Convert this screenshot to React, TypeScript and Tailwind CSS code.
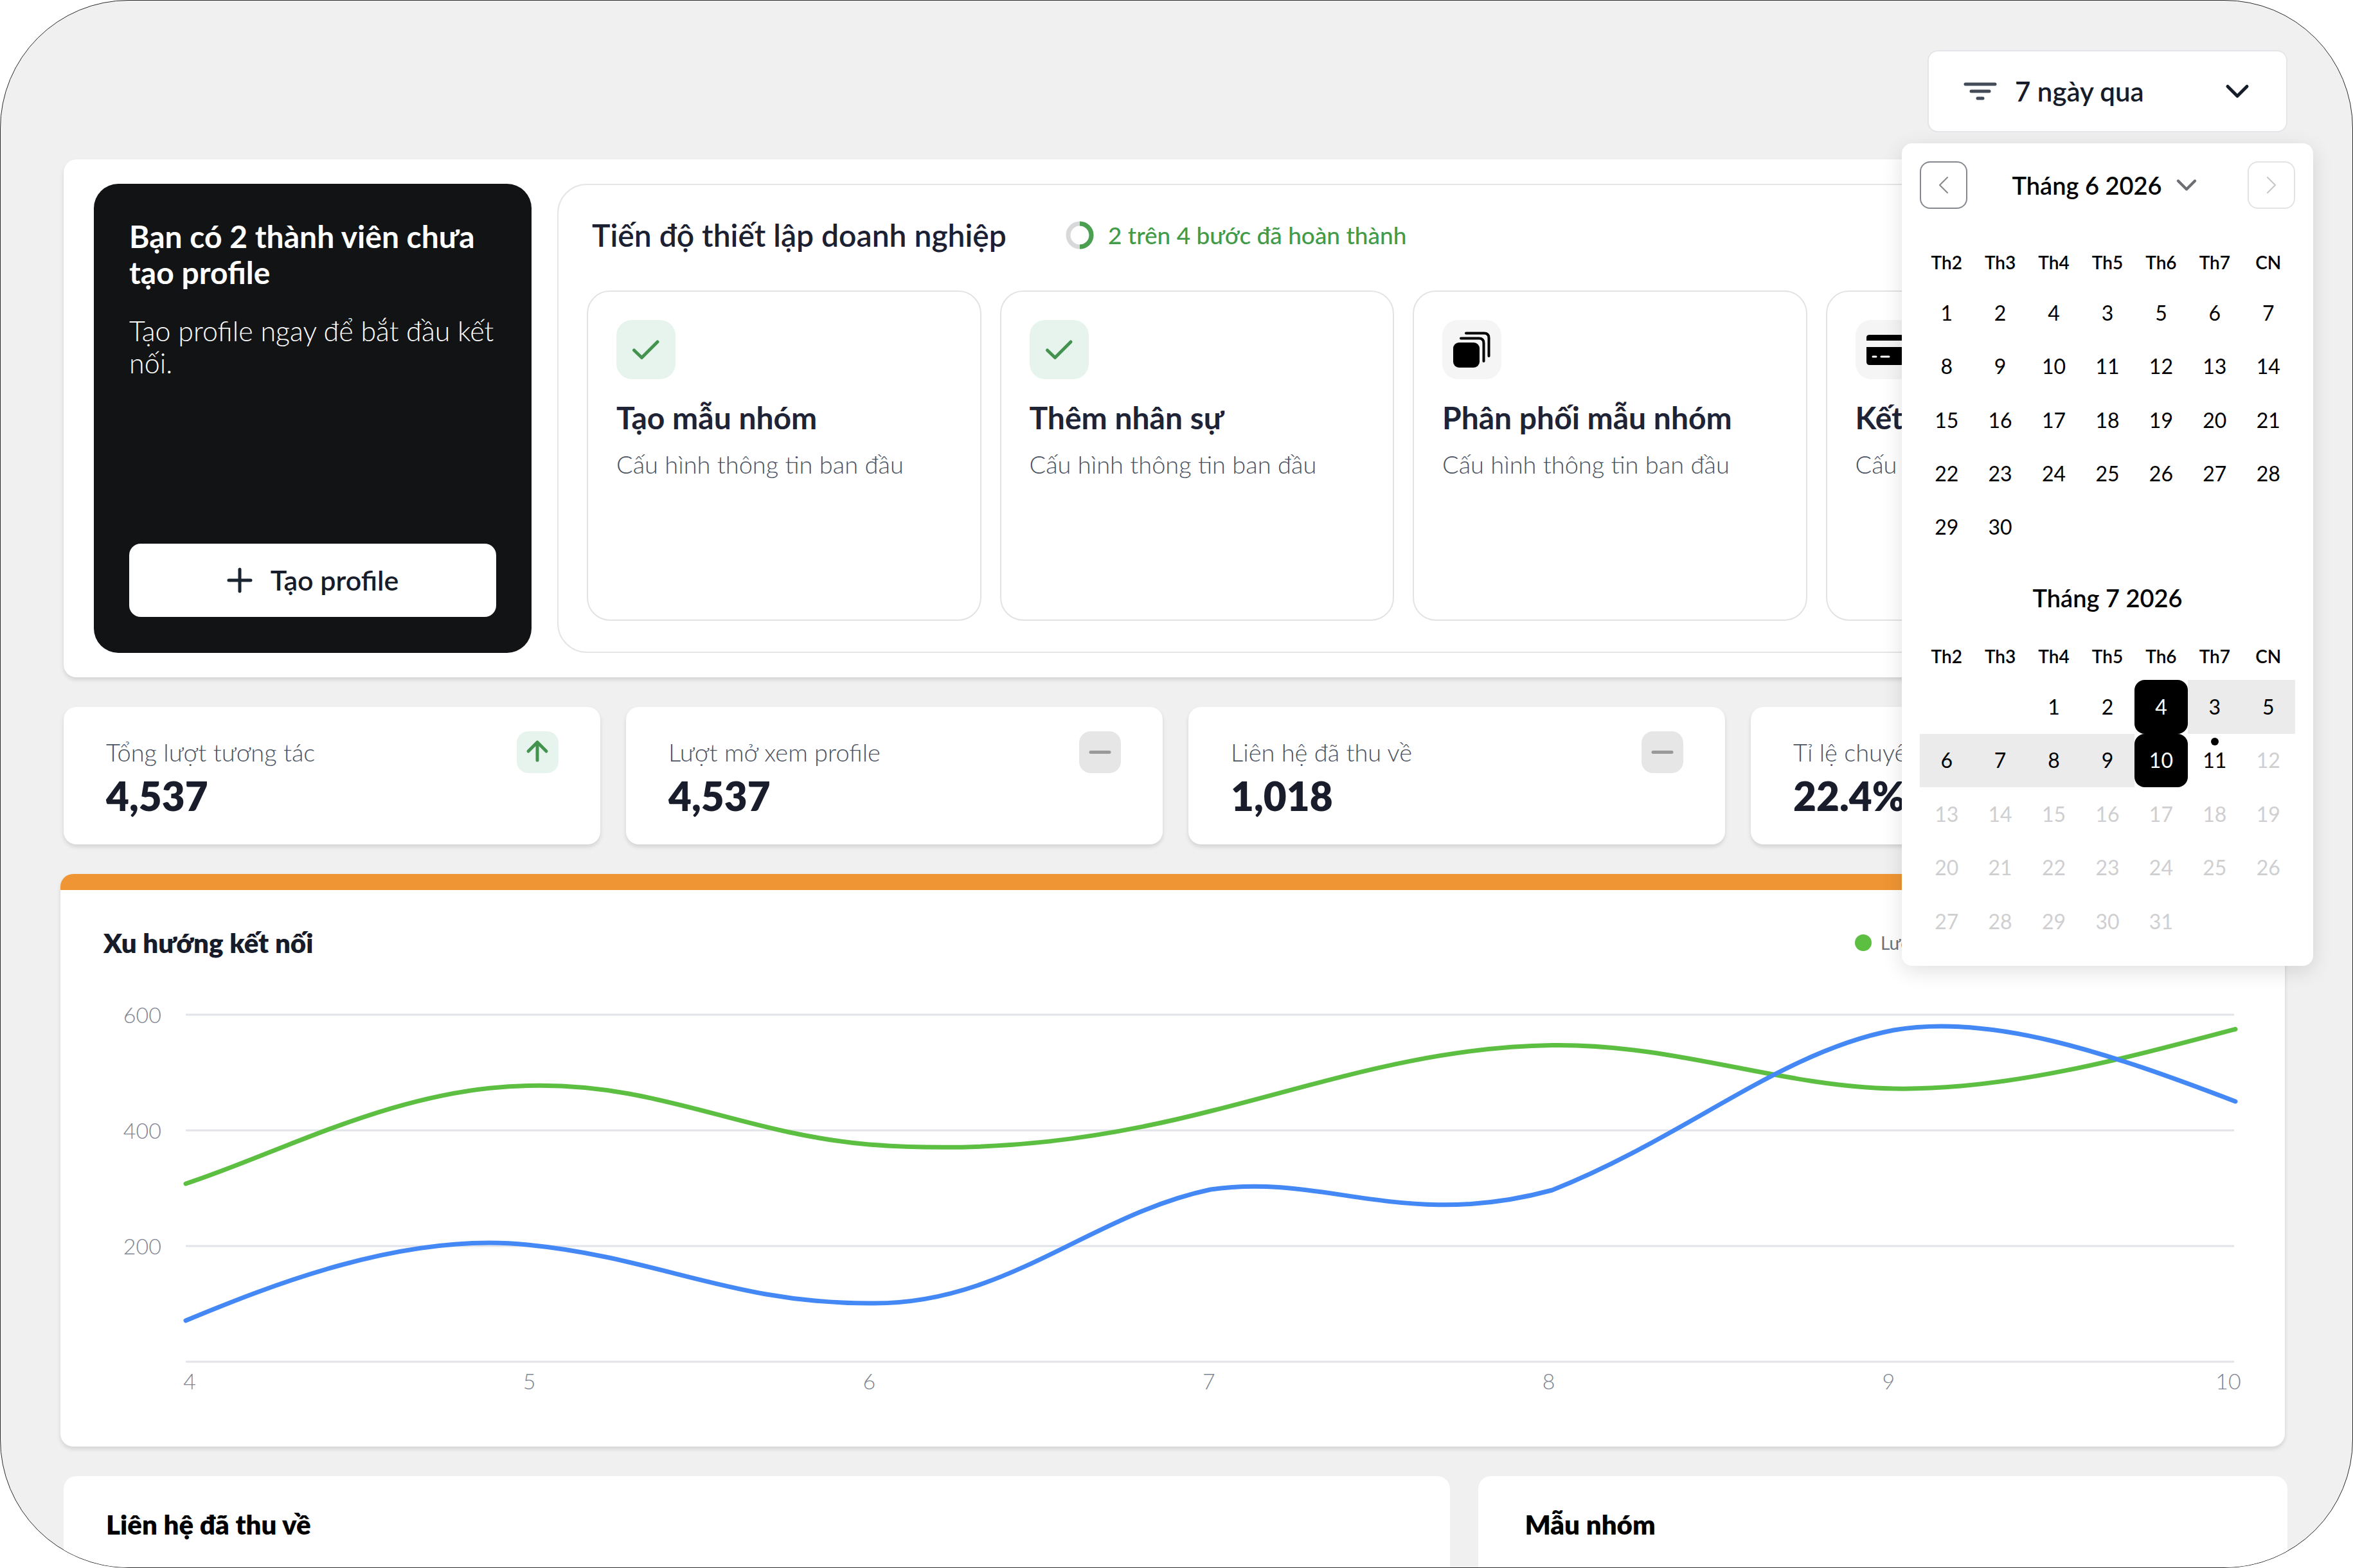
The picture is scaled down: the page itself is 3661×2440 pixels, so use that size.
import { ChevronDown, ChevronLeft, ChevronRight } from 'lucide-react'
import clsx from 'clsx'

const WEEKDAYS = ['Th2', 'Th3', 'Th4', 'Th5', 'Th6', 'Th7', 'CN']

const JUNE = [1, 2, 4, 3, 5, 6, 7, ...Array.from({ length: 23 }, (_, i) => i + 8)]

const JULY = [1, 2, 4, 3, ...Array.from({ length: 27 }, (_, i) => i + 5)]

const STEPS = [
  { title: 'Tạo mẫu nhóm',        icon: <CheckIcon />, done: true  },
  { title: 'Thêm nhân sự',        icon: <CheckIcon />, done: true  },
  { title: 'Phân phối mẫu nhóm',  icon: <StackIcon />, done: false },
  { title: 'Kết nối',             icon: <CardIcon />,  done: false },
]

const STATS = [
  { label: 'Tổng lượt tương tác', value: '4,537', up: true  },
  { label: 'Lượt mở xem profile', value: '4,537', up: false },
  { label: 'Liên hệ đã thu về',   value: '1,018', up: false },
  { label: 'Tỉ lệ chuyển đổi',    value: '22.4%', up: false },
]

const LEGEND = [
  { label: 'Lượt mở xem profile', dot: 'bg-[#5dbf42]' },
  { label: 'Liên hệ đã thu về',   dot: 'bg-[#4488f6]' },
]

const CARD = 'rounded-[20px] bg-white shadow-[0_4px_6px_rgba(0,0,0,0.12)]'

function CheckIcon() {
  return (
    <svg width="92" height="92" viewBox="0 0 92 92" fill="none" stroke="#43934f" strokeWidth="5" strokeLinecap="round" strokeLinejoin="round" aria-hidden="true">
      <path d="M27.5 47 L39.5 58.5 L64 34" />
    </svg>
  )
}

function StackIcon() {
  return (
    <svg width="92" height="92" viewBox="0 0 92 92" fill="none" stroke="#000" strokeWidth="4" strokeLinecap="round" aria-hidden="true">
      <rect x="17" y="35" width="41" height="39" rx="9" fill="#000" stroke="none" />
      <path d="M29 28.500 H57 Q64.500 28.500 64.500 36 V64" />
      <path d="M37 20.500 H65 Q72.500 20.500 72.500 28 V56" />
    </svg>
  )
}

function CardIcon() {
  return (
    <svg width="92" height="92" viewBox="0 0 92 92" aria-hidden="true">
      <path d="M17 32 V27 Q17 23 22 23 H70 Q75 23 75 27 V32 Z" />
      <path d="M17 42 H75 V65 Q75 70 70 70 H22 Q17 70 17 65 Z" />
      <path d="M27 57 H32 M40 57 H52" stroke="#fff" strokeWidth="3" strokeLinecap="round" />
    </svg>
  )
}

function Weekdays() {
  return (
    <div className="grid h-[74px] grid-cols-7 items-center text-center text-[28px] leading-10 font-semibold">
      {WEEKDAYS.map((day) => (
        <span key={day}>{day}</span>
      ))}
    </div>
  )
}

function DatePanel() {
  return (
    <div role="dialog" aria-label="Chọn khoảng ngày" className="absolute top-full -right-10 z-10 mt-[17px] w-[640px] rounded-[16px] bg-white p-7 text-black shadow-[0_8px_32px_rgba(0,0,0,0.12)]">
      <div className="flex items-center justify-between">
        <button type="button" aria-label="Tháng trước" className="flex h-[74px] w-[74px] items-center justify-center rounded-[16px] border-2 border-[#85888e] text-[#85888e]">
          <ChevronLeft size={48} strokeWidth={1} />
        </button>
        <button type="button" className="flex items-center gap-3 text-[38px] leading-12 font-semibold">
          Tháng 6 2026
          <ChevronDown size={52} strokeWidth={2} className="text-[#6b6e73]" />
        </button>
        <button type="button" aria-label="Tháng sau" className="flex h-[74px] w-[74px] items-center justify-center rounded-[16px] border-2 border-[#e2e3e5] text-[#c4c6ca]">
          <ChevronRight size={48} strokeWidth={1} />
        </button>
      </div>

      <div className="mt-[46px]">
        <Weekdays />
        <div className="grid grid-cols-7 text-[32px] leading-10">
          {JUNE.map((day) => (
            <button key={day} type="button" className="aspect-square">{day}</button>
          ))}
        </div>
      </div>

      <h3 className="pt-11 pb-[30px] text-center text-[38px] leading-12 font-semibold">Tháng 7 2026</h3>
      <Weekdays />
      <div className="grid grid-cols-7 text-[32px] leading-10">
        {JULY.map((day, i) => {
          const edge = i === 2 || i === 9
          return (
            <button
              key={day}
              type="button"
              disabled={i > 10}
              className={clsx(
                'relative aspect-square',
                i === 0 && 'col-start-3',
                edge && 'rounded-[16px] bg-black text-white',
                !edge && i > 2 && i < 9 && 'bg-[#ebebeb]',
                i > 10 && 'text-[#cfcfd1]',
              )}
            >
              {day}
              {i === 10 && <span className="absolute top-1.5 left-1/2 h-3 w-3 -translate-x-1/2 rounded-full bg-black" />}
            </button>
          )
        })}
      </div>
    </div>
  )
}

function TopBar() {
  return (
    <div className="flex justify-end">
      <div className="relative">
        <button type="button" aria-haspopup="dialog" aria-expanded="true" className="flex h-32 w-[560px] items-center rounded-[16px] border-2 border-[#e4e5e8] bg-white pr-[46px] pl-[54px] text-[42px] leading-12 font-semibold text-[#171c2a]">
          <svg width="52" height="30" viewBox="0 0 52 30" stroke="#434a58" strokeWidth="5" strokeLinecap="round" aria-hidden="true">
            <path d="M3 4 H49 M12 15 H40 M22 26 H30" />
          </svg>
          <span className="ml-7">7 ngày qua</span>
          <ChevronDown size={60} strokeWidth={2} className="ml-auto" />
        </button>
        <DatePanel />
      </div>
    </div>
  )
}

function Setup() {
  return (
    <section className={clsx(CARD, 'mt-[42px] flex gap-10 px-[47px] py-[38px]')}>
      <div className="flex min-h-[730px] w-[681px] shrink-0 flex-col rounded-[38px] bg-[#121315] px-[55px] pt-[54px] pb-14 text-white">
        <h2 className="text-[48px] leading-14 font-bold">Bạn có 2 thành viên chưa tạo profile</h2>
        <p className="mt-[38px] text-[43px] leading-[50px] font-light">Tạo profile ngay để bắt đầu kết nối.</p>
        <button type="button" className="mt-auto flex h-[114px] items-center justify-center gap-7 rounded-[18px] bg-white text-[43px] leading-12 font-semibold text-[#171c2a]">
          <svg width="40" height="40" viewBox="0 0 40 40" stroke="#1b2431" strokeWidth="5" strokeLinecap="round" aria-hidden="true">
            <path d="M20 3 V37 M3 20 H37" />
          </svg>
          Tạo profile
        </button>
      </div>

      <div className="flex min-w-0 flex-1 flex-col rounded-[46px] border-2 border-[#e5e5e6] pt-[50px] pr-14 pb-12 pl-11">
        <div className="flex items-center gap-[92px] pl-2">
          <h2 className="text-[48px] leading-14 font-semibold text-[#1b2133]">Tiến độ thiết lập doanh nghiệp</h2>
          <p className="flex items-center gap-[22px] text-[37px] leading-12 font-medium text-[#429b48]">
            <svg width="44" height="44" viewBox="0 0 44 44" fill="none" strokeWidth="7" aria-hidden="true">
              <circle cx="22" cy="22" r="18" stroke="#d8d9da" />
              <path d="M22 4 A18 18 0 0 1 22 40" stroke="#4a9f50" />
            </svg>
            2 trên 4 bước đã hoàn thành
          </p>
        </div>
        <div className="mt-[58px] grid flex-1 grid-cols-4 gap-[29px]">
          {STEPS.map(({ title, icon, done }) => (
            <div key={title} className="rounded-[36px] border-2 border-[#e3e3e5] px-11 pt-11">
              <div className={clsx('h-[92px] w-[92px] rounded-[24px]', done ? 'bg-[#e7f4ed]' : 'bg-[#f5f5f5]')}>{icon}</div>
              <h3 className="mt-8 text-[48px] leading-14 font-bold whitespace-nowrap text-[#1e2436]">{title}</h3>
              <p className="mt-5 text-[38px] leading-12 font-light whitespace-nowrap text-[#4a5362]">Cấu hình thông tin ban đầu</p>
            </div>
          ))}
        </div>
      </div>
    </section>
  )
}

function Stats() {
  return (
    <section className="mt-[46px] grid grid-cols-4 gap-10">
      {STATS.map(({ label, value, up }, i) => (
        <div key={i} className={clsx(CARD, 'flex items-start justify-between pt-[38px] pr-[65px] pb-10 pl-[66px]')}>
          <div className="pt-2">
            <p className="text-[38px] leading-12 font-light text-[#4a5362]">{label}</p>
            <p className="mt-2 text-[62px] leading-18 font-extrabold text-[#191d2b]">{value}</p>
          </div>
          <svg width="65" height="65" viewBox="0 0 65 65" fill="none" strokeLinecap="round" strokeLinejoin="round" aria-hidden="true">
            <rect width="65" height="65" rx="18" fill={up ? '#e7f4ed' : '#e6e6e6'} />
            {up
              ? <path d="M32 45 V17 M18 31 L32 17 L46 31" stroke="#43934f" strokeWidth="5" />
              : <path d="M18 32.500 H47" stroke="#999" strokeWidth="5" />}
          </svg>
        </div>
      ))}
    </section>
  )
}

function TrendChart() {
  return (
    <section className={clsx(CARD, 'mt-[46px] mr-1 -ml-[5px] border-t-[25px] border-[#ef9534] pt-[54px] pr-[77px] pb-[82px] pl-[67px]')}>
      <div className="flex items-center justify-between">
        <h2 className="text-[42px] leading-14 font-extrabold text-[#171c2a]">Xu hướng kết nối</h2>
        <div className="flex w-[592px] gap-8 text-[28px] leading-10 whitespace-nowrap text-[#6b7280]">
          {LEGEND.map(({ label, dot }) => (
            <span key={label} className="flex items-center gap-[14px]">
              <span className={clsx('h-[26px] w-[26px] rounded-full', dot)} />
              {label}
            </span>
          ))}
        </div>
      </div>

      <div className="mt-[84px] flex text-[34px] leading-10 font-light text-[#7f8693]">
        <div className="flex w-[128px] shrink-0 flex-col justify-between pr-[38px]">
          <span className="flex h-0 items-center justify-end">600</span>
          <span className="flex h-0 items-center justify-end">400</span>
          <span className="flex h-0 items-center justify-end">200</span>
          <span className="h-0" />
        </div>
        <svg viewBox="0 0 3189 540" className="min-w-0 flex-1 overflow-visible" fill="none" strokeLinecap="round" role="img" aria-label="Xu hướng kết nối">
          <path d="M0 0 H3187 M0 180 H3187 M0 360 H3187 M0 540 H3187" stroke="#e2e4e9" strokeWidth="3" strokeLinecap="butt" />
          <path d="M0 263 C150 214 330 114 531.500 110.500 C735 105 860 184 1063 202 C1260 217 1430 192 1594.500 150 C1760 109 1930 50 2126 47.500 C2320 45 2480 112 2657.500 115 C2830 118 3010 70 3189 22.500" stroke="#5dbf42" strokeWidth="7" />
          <path d="M0 476 C130 422 340 338 531.500 358 C735 378 850 449 1063 449 C1275 453 1405 312 1594.500 272 C1770 246 1895 336 2126 273 C2335 190 2480 58 2657.500 24 C2810 -2 2990 59 3189 135" stroke="#4488f6" strokeWidth="7" />
        </svg>
      </div>
      <div className="mt-2.5 -mr-[9px] ml-[114px] flex justify-between text-center text-[34px] leading-10 font-light text-[#7f8693]">
        {[4, 5, 6, 7, 8, 9, 10].map((day) => (
          <span key={day} className="w-10">{day}</span>
        ))}
      </div>
    </section>
  )
}

export default function App() {
  return (
    <main className="flex min-h-screen flex-col overflow-hidden rounded-[200px] border border-[#2a2a2a] bg-[#f0f0f0] pt-[77px] pr-[101px] pl-[98px] font-['Lato',sans-serif]">
      <TopBar />
      <Setup />
      <Stats />
      <TrendChart />
      <section className="mt-[46px] grid flex-1 grid-cols-[12fr_7fr] gap-11">
        <div className="rounded-t-[20px] bg-white px-[66px] pt-[47px]">
          <h2 className="text-[42px] leading-14 font-extrabold">Liên hệ đã thu về</h2>
        </div>
        <div className="rounded-t-[20px] bg-white px-[72px] pt-[47px]">
          <h2 className="text-[42px] leading-14 font-extrabold">Mẫu nhóm</h2>
        </div>
      </section>
    </main>
  )
}
